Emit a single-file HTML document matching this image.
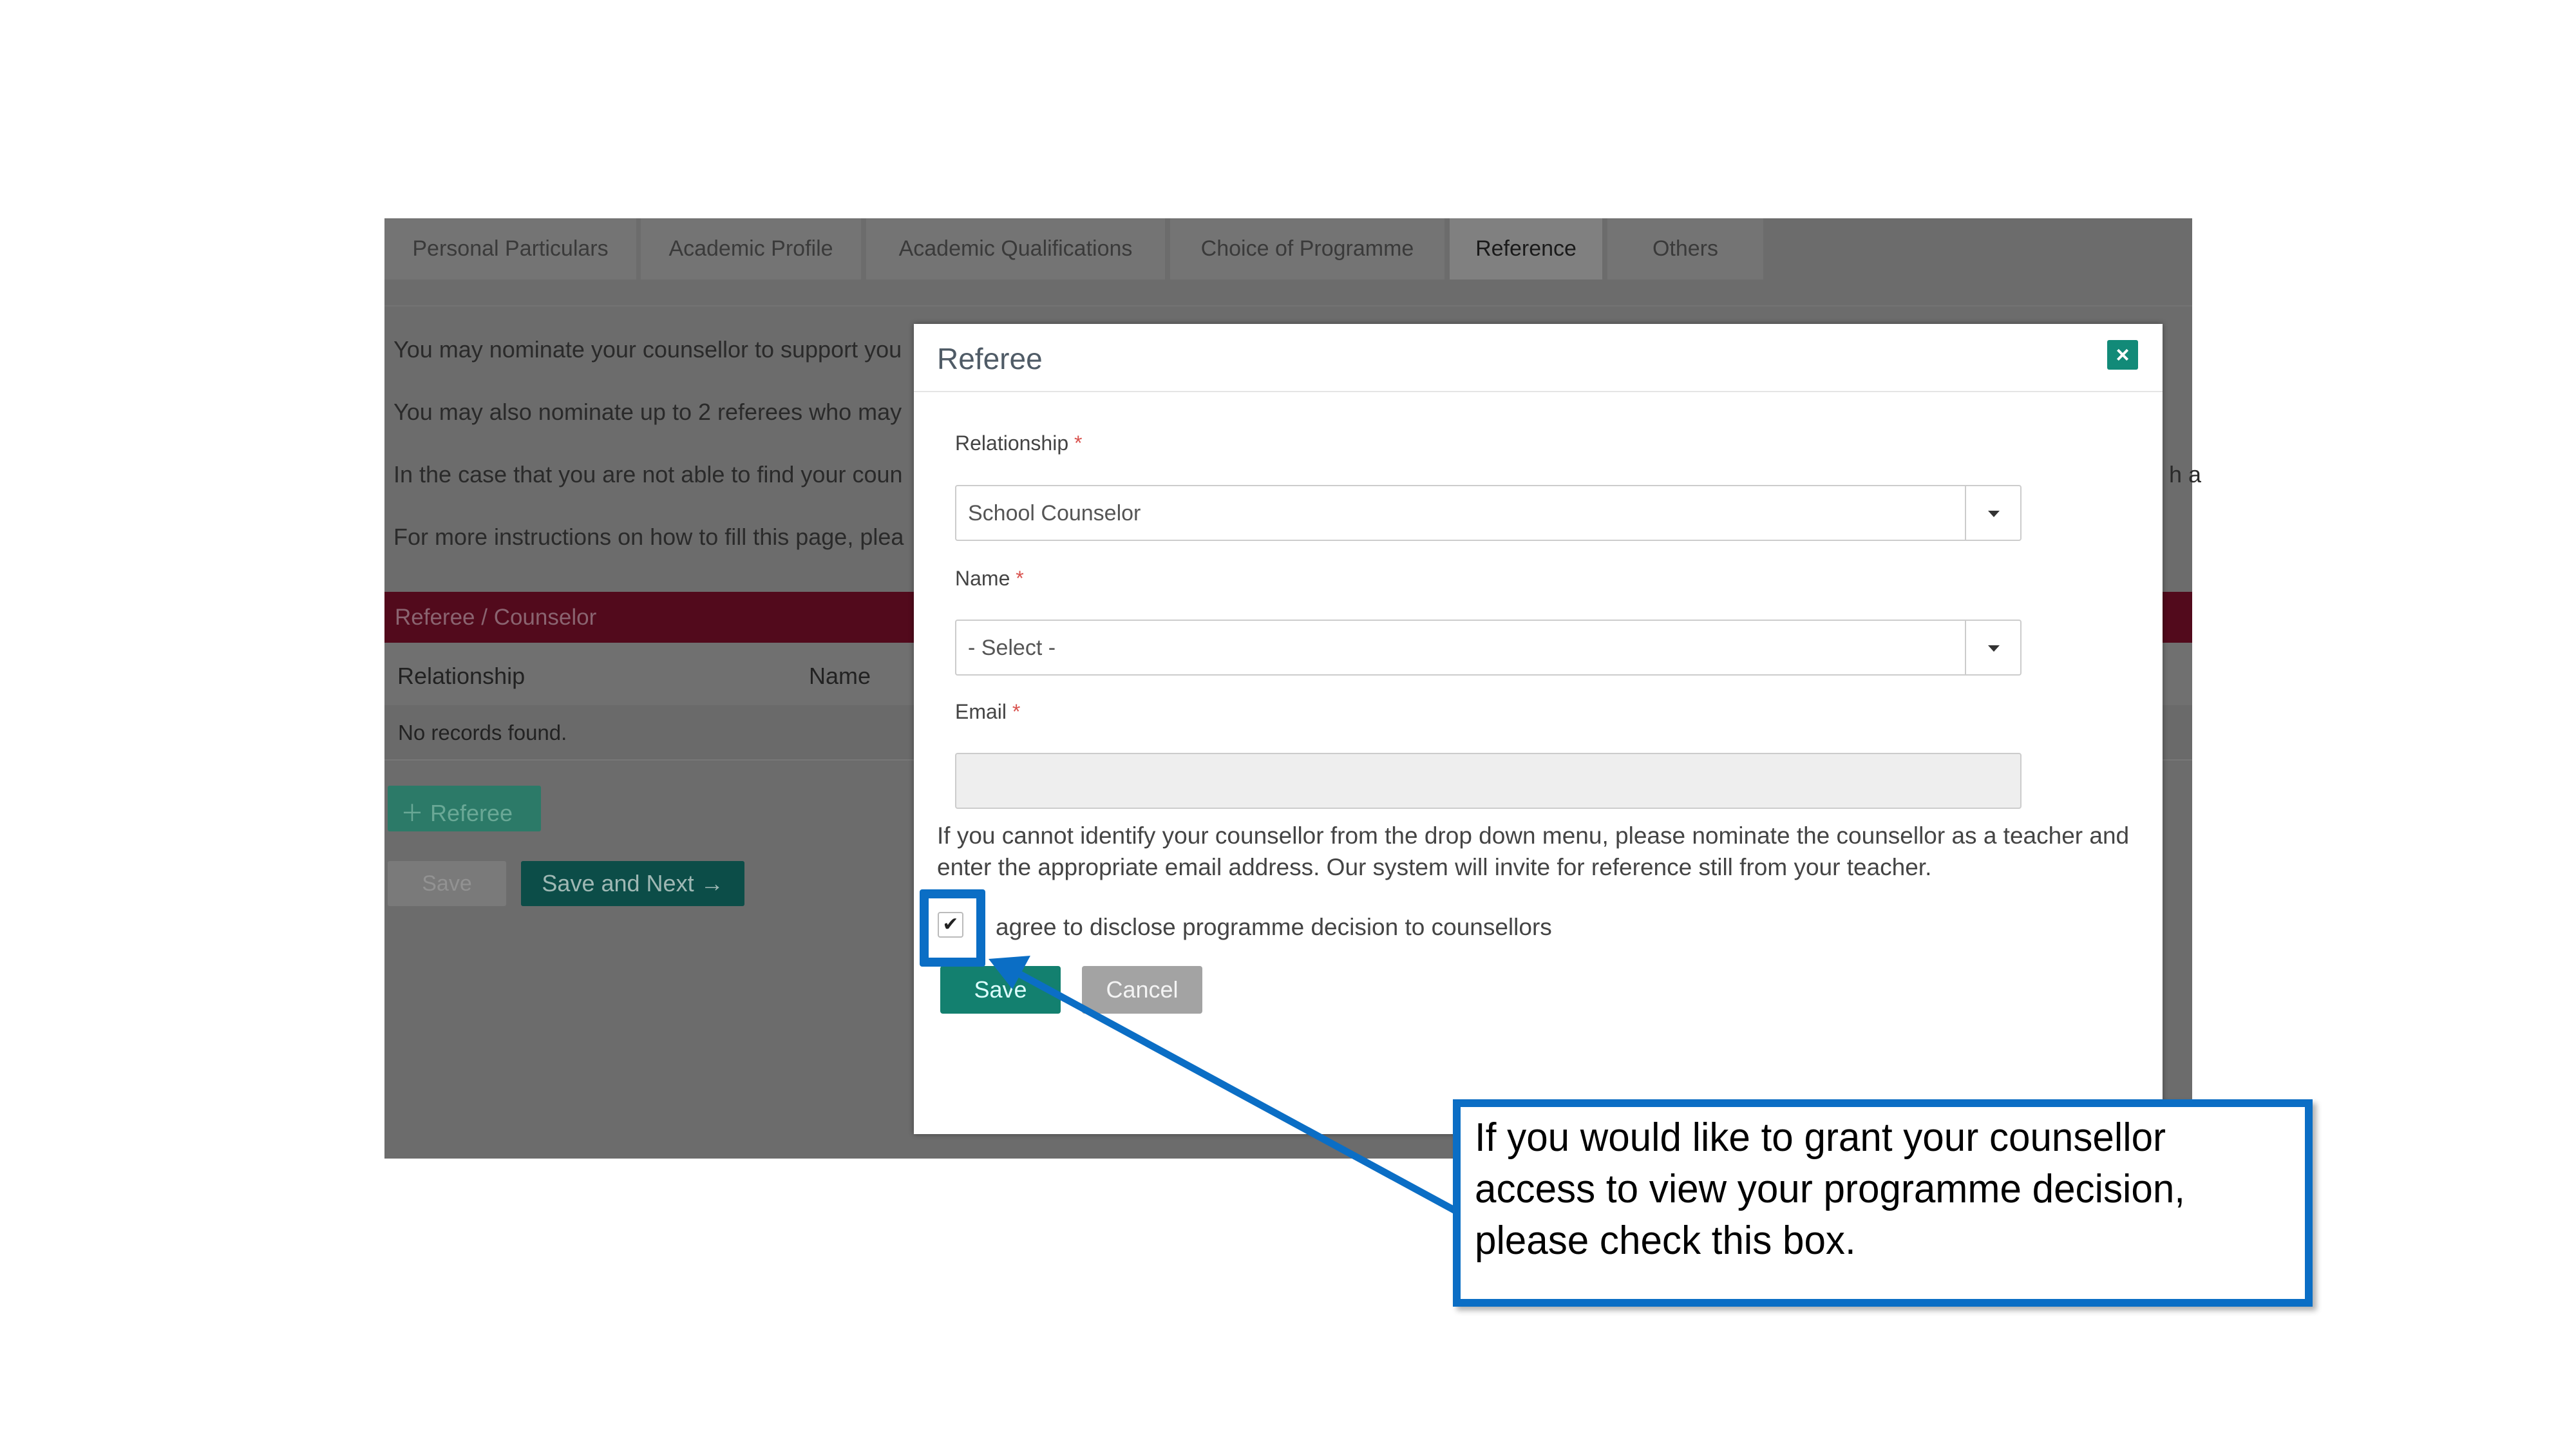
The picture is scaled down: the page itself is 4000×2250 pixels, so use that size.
<!DOCTYPE html>
<html><head><meta charset="utf-8"><style>
body{margin:0;width:4000px;height:2250px;background:#fff;position:relative;overflow:hidden;font-family:"Liberation Sans",sans-serif}
.a{position:absolute;white-space:nowrap}
.tab{position:absolute;top:339px;height:95px;background:#747474;color:#3a3a3a;font-size:34px;line-height:95px;text-align:center}
.bt{font-size:36px;color:#2a2a2a}
.lbl{font-size:32px;color:#444}
.lbl span{color:#d9534f}
.sel{position:absolute;left:1483px;width:1656px;height:87px;border:2px solid #ccc;border-radius:4px;background:#fff;font-size:34px;color:#555;line-height:84px;box-sizing:border-box;padding-left:18px}
.sel i{position:absolute;right:0;top:0;width:84px;height:83px;border-left:2px solid #ccc}
.sel i:after{content:"";position:absolute;left:34px;top:38px;border:9px solid transparent;border-top:10px solid #333}
</style></head><body>
<div class="a" style="left:597px;top:339px;width:2807px;height:1460px;background:#6c6c6c"></div>
<div class="tab" style="left:597px;width:391px">Personal Particulars</div>
<div class="tab" style="left:995px;width:342px">Academic Profile</div>
<div class="tab" style="left:1345px;width:464px">Academic Qualifications</div>
<div class="tab" style="left:1817px;width:426px">Choice of Programme</div>
<div class="tab" style="left:2251px;width:237px;background:#808080;color:#1a1a1a">Reference</div>
<div class="tab" style="left:2496px;width:242px">Others</div>
<div class="a" style="left:597px;top:474px;width:2807px;height:2px;background:#737373"></div>
<div class="a bt" style="left:611px;top:522px">You may nominate your counsellor to support you</div>
<div class="a bt" style="left:611px;top:619px">You may also nominate up to 2 referees who may</div>
<div class="a bt" style="left:611px;top:716px">In the case that you are not able to find your coun</div>
<div class="a bt" style="left:611px;top:813px">For more instructions on how to fill this page, plea</div>
<div class="a bt" style="left:3368px;top:716px">h a</div>
<div class="a" style="left:597px;top:919px;width:2807px;height:79px;background:#520a1c"></div>
<div class="a" style="left:613px;top:939px;font-size:35px;color:#8a6470">Referee / Counselor</div>
<div class="a" style="left:597px;top:998px;width:2807px;height:97px;background:#707070"></div>
<div class="a" style="left:617px;top:1029px;font-size:36px;color:#222">Relationship</div>
<div class="a" style="left:1256px;top:1029px;font-size:36px;color:#222">Name</div>
<div class="a" style="left:597px;top:1095px;width:2807px;height:84px;background:#6a6a6a;border-bottom:2px solid #777"></div>
<div class="a" style="left:618px;top:1119px;font-size:33px;color:#222">No records found.</div>
<div class="a" style="left:602px;top:1220px;width:238px;height:71px;background:#2c7a68;border-radius:3px"></div>
<div class="a" style="left:622px;top:1234px;font-size:36px;color:#6aa896">＋ Referee</div>
<div class="a" style="left:602px;top:1337px;width:184px;height:70px;background:#7a7a7a;border-radius:3px;color:#929292;font-size:34px;line-height:70px;text-align:center">Save</div>
<div class="a" style="left:809px;top:1337px;width:347px;height:70px;background:#0c4d48;border-radius:3px;color:#9fb8b4;font-size:36px;line-height:70px;text-align:center">Save and Next →</div>
<!-- modal -->
<div class="a" style="left:1419px;top:503px;width:1939px;height:1258px;background:#fff;box-shadow:0 0 8px rgba(0,0,0,.4)"></div>
<div class="a" style="left:1419px;top:607px;width:1939px;height:2px;background:#e5e5e5"></div>
<div class="a" style="left:1455px;top:530px;font-size:46px;color:#4f5b66">Referee</div>
<div class="a" style="left:3272px;top:528px;width:48px;height:46px;background:#128a78;border-radius:3px;color:#fff;font-size:36px;font-weight:bold;line-height:46px;text-align:center">×</div>
<div class="a lbl" style="left:1483px;top:670px">Relationship <span>*</span></div>
<div class="sel" style="top:753px">School Counselor<i></i></div>
<div class="a lbl" style="left:1483px;top:880px">Name <span>*</span></div>
<div class="sel" style="top:962px">- Select -<i></i></div>
<div class="a lbl" style="left:1483px;top:1087px">Email <span>*</span></div>
<div class="a" style="left:1483px;top:1169px;width:1656px;height:87px;background:#eee;border:2px solid #ccc;border-radius:4px;box-sizing:border-box"></div>
<div class="a" style="left:1455px;top:1273px;font-size:37px;color:#444;line-height:49px">If you cannot identify your counsellor from the drop down menu, please nominate the counsellor as a teacher and<br>enter the appropriate email address. Our system will invite for reference still from your teacher.</div>
<div class="a" style="left:1456px;top:1416px;width:36px;height:36px;border:2px solid #bbb;border-radius:4px;color:#222;font-size:30px;line-height:36px;text-align:center">✔</div>
<div class="a" style="left:1546px;top:1419px;font-size:37px;color:#444">agree to disclose programme decision to counsellors</div>
<div class="a" style="left:1460px;top:1500px;width:187px;height:74px;background:#13806f;border-radius:4px;color:#dff;font-size:36px;line-height:74px;text-align:center">Save</div>
<div class="a" style="left:1680px;top:1500px;width:187px;height:74px;background:#a3a3a3;border-radius:4px;color:#f4f4f4;font-size:36px;line-height:74px;text-align:center">Cancel</div>
<!-- annotation -->
<div class="a" style="left:1428px;top:1381px;width:102px;height:120px;border:14px solid #0b6ec5;box-sizing:border-box;border-radius:4px"></div>
<svg class="a" style="left:0;top:0" width="4000" height="2250"><line x1="2260" y1="1880" x2="1575" y2="1508" stroke="#0b6ec5" stroke-width="11"/><polygon points="1535,1489 1600,1484 1572,1536" fill="#0b6ec5"/></svg>
<div class="a" style="left:2256px;top:1707px;width:1335px;height:322px;border:12px solid #0b6ec5;box-sizing:border-box;background:#fff;box-shadow:6px 6px 8px rgba(0,0,0,.3)"></div>
<div class="a" style="left:2290px;top:1727px;font-size:62px;line-height:80px;color:#000;transform:scaleX(.97);transform-origin:left top">If you would like to grant your counsellor<br>access to view your programme decision,<br>please check this box.</div>
</body></html>
